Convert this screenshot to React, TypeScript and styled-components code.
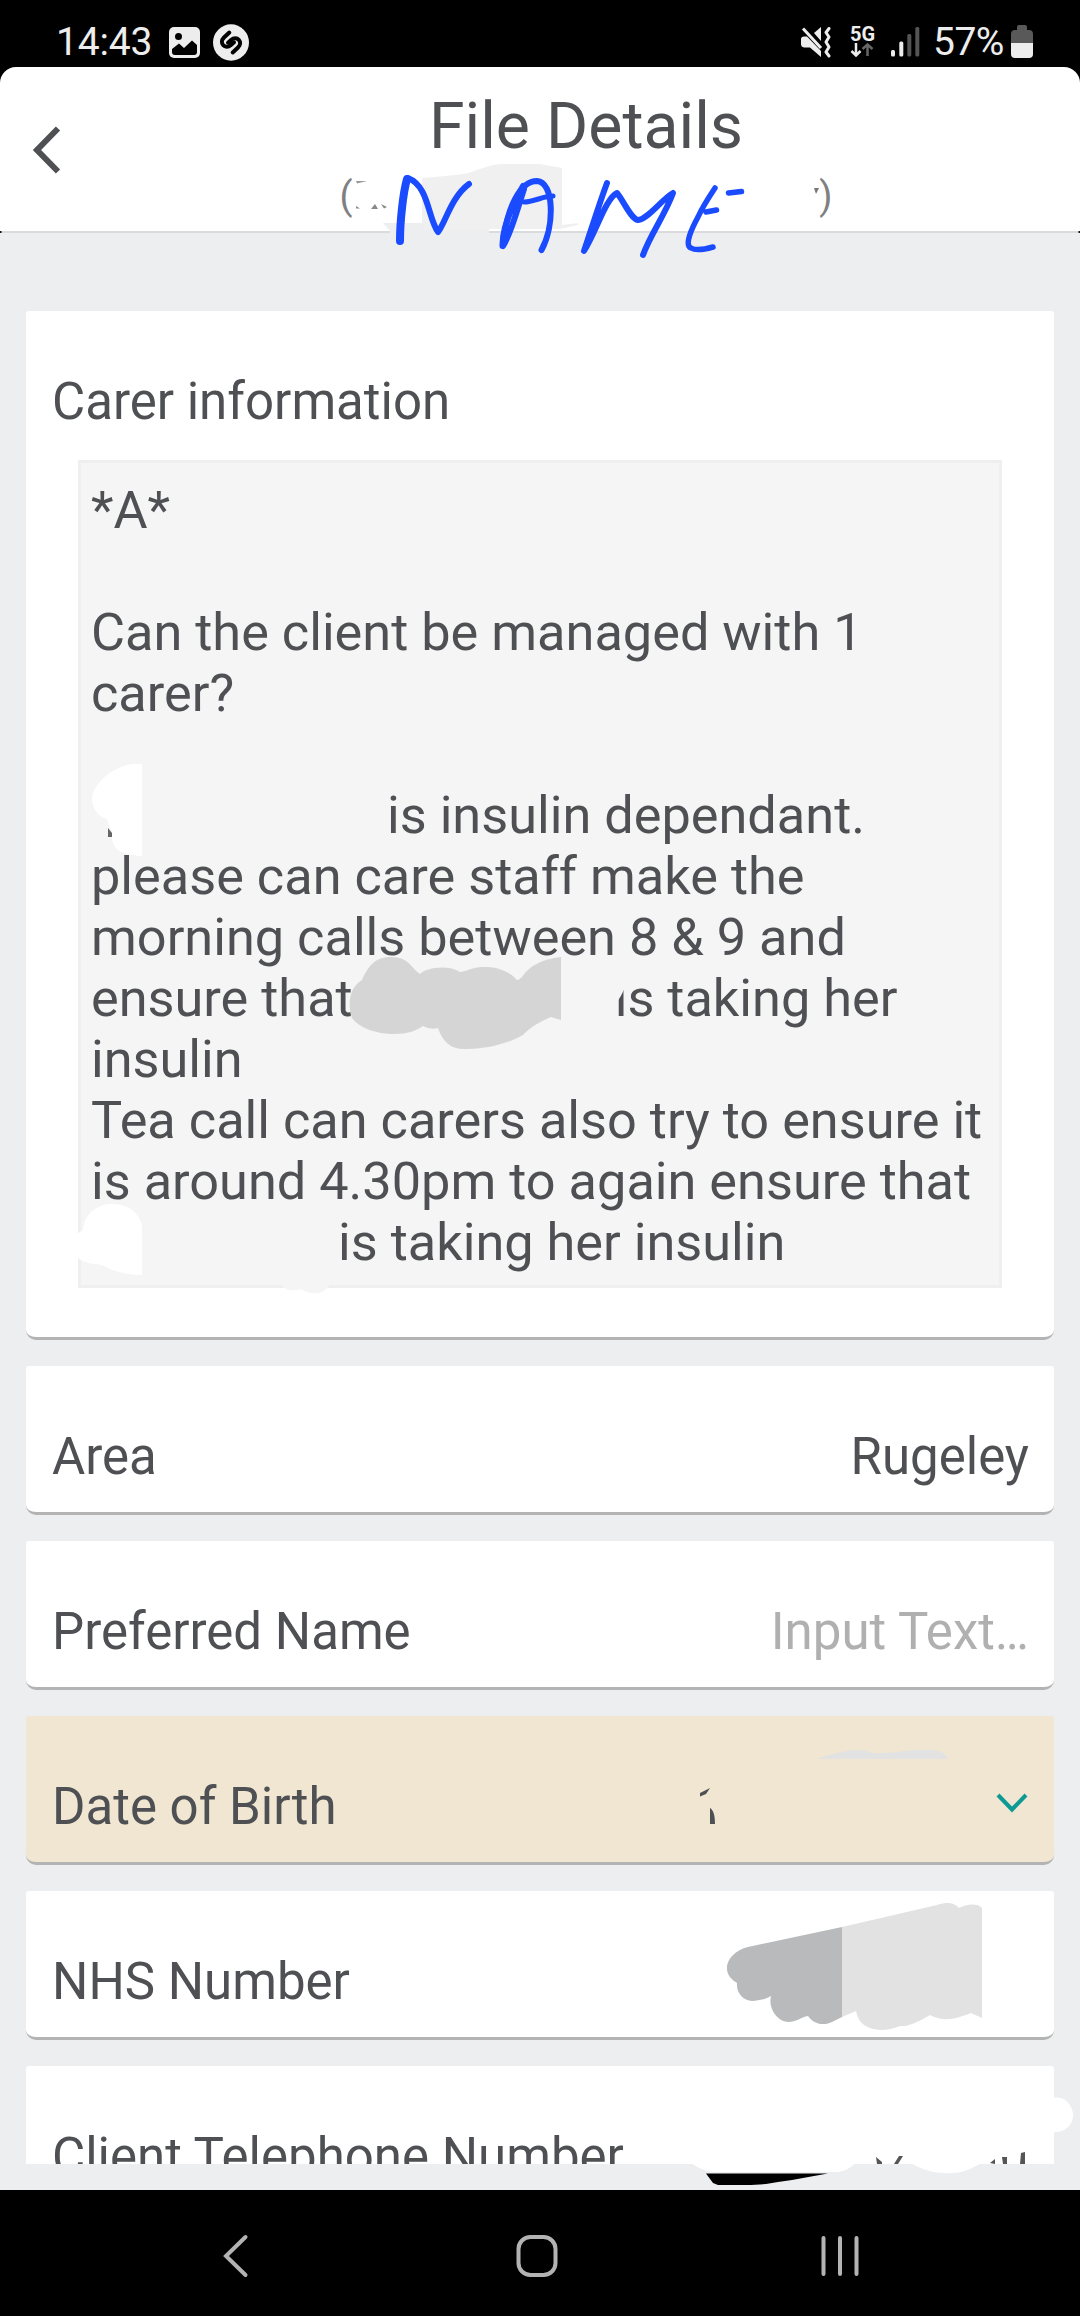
import React from "react";
import styled, { createGlobalStyle } from "styled-components";

const GlobalStyle = createGlobalStyle`
  * { box-sizing: border-box; }
  body { margin: 0; background: #000; }
`;

const Screen = styled.div`
  position: relative;
  display: flex;
  flex-direction: column;
  width: 1080px;
  height: 2316px;
  overflow: hidden;
  background: #000;
  color: #4f5053;
  font-family: Roboto, "Liberation Sans", sans-serif;
  font-size: 51px;
  line-height: 61px;
`;

const StatusBar = styled.header`
  display: flex;
  justify-content: space-between;
  flex: none;
  height: 67px;
  padding: 18px 47px 0 56px;
  color: #ededed;
  font-size: 39px;
  line-height: 48px;
`;

const StatusGroup = styled.div`
  display: flex;
  align-items: flex-start;
`;

const StatusIcon = styled.svg<{ $left: number; $top?: number }>`
  display: block;
  flex: none;
  margin-left: ${(p) => p.$left}px;
  margin-top: ${(p) => p.$top ?? 0}px;
`;

const Network = styled.div`
  display: flex;
  flex-direction: column;
  width: 25px;
  margin: 7px 0 0 18px;
  font-size: 20px;
  font-weight: 700;
  line-height: 18px;
`;

const Clock = styled.span`
  width: 96px;
  letter-spacing: -0.2px;
  white-space: nowrap;
`;

const Percent = styled.span`
  width: 75px;
  margin-left: 13px;
  letter-spacing: -0.5px;
  white-space: nowrap;
`;

const TitleBar = styled.div`
  display: grid;
  grid-template-columns: 92px 1fr;
  flex: none;
  height: 166px;
  border-bottom: 2px solid #d9dbde;
  border-radius: 16px 16px 0 0;
  background: #fff;
`;

const BackIcon = styled.svg`
  display: block;
  margin: 58px 0 0 32px;
`;

const TitleBlock = styled.div`
  display: flex;
  flex-direction: column;
  align-items: center;
  padding-top: 21px;
`;

const Title = styled.h1`
  margin: 0;
  font-size: 64.4px;
  font-weight: 400;
  line-height: 76px;
`;

const Subtitle = styled.div`
  display: flex;
  justify-content: space-between;
  width: 493px;
  color: #808080;
  font-size: 38px;
  line-height: 44px;
  margin-top: 10px;
`;

const Content = styled.main`
  flex: none;
  height: 1957px;
  padding: 78px 26px 26px;
  background: #edeef0;
`;

const Scroller = styled.div`
  display: flex;
  flex-direction: column;
  gap: 26px;
  height: 1853px;
  overflow: hidden;
`;

const Card = styled.section<{ $tint?: boolean }>`
  flex: none;
  padding: 60px 25px 25px 26px;
  border-bottom: 3px solid #b3b3b3;
  border-radius: 3px 3px 10px 10px;
  background: ${(p) => (p.$tint ? "#f0e6d2" : "#fff")};
`;

const Row = styled.div`
  display: flex;
  justify-content: space-between;
  align-items: flex-start;
  height: 61px;
`;

const Value = styled.span<{ $muted?: boolean }>`
  color: ${(p) => (p.$muted ? "#b0b0b0" : "inherit")};
`;

const Notes = styled.div`
  width: 924px;
  height: 828px;
  margin: 28px 0 24px 26px;
  padding: 17px 10px 0 10px;
  border: 3px solid #efefef;
  background: #f5f5f5;
  font-size: 52.27px;
  white-space: nowrap;
`;

const Line = styled.div<{ $indent?: number }>`
  height: 61px;
  padding-left: ${(p) => p.$indent ?? 0}px;
`;

const Gap = styled.span<{ $w: number }>`
  display: inline-block;
  width: ${(p) => p.$w}px;
`;

const Chevron = styled.svg`
  display: block;
  margin: 15px 1px 0 0;
`;

const NavBar = styled.nav`
  display: flex;
  flex: none;
  height: 126px;
  padding: 41px 0 0 222px;
`;

const NavIcon = styled.svg<{ $left?: number }>`
  display: block;
  flex: none;
  margin-left: ${(p) => p.$left ?? 0}px;
`;

const Markup = styled.svg`
  position: absolute;
  inset: 0;
  pointer-events: none;
`;

function Field({
  label,
  tint,
  children,
}: {
  label: string;
  tint?: boolean;
  children?: React.ReactNode;
}) {
  return (
    <Card $tint={tint}>
      <Row>
        <span>{label}</span>
        {children}
      </Row>
    </Card>
  );
}

function StatusIcons() {
  return (
    <StatusBar>
      <StatusGroup>
        <Clock>14:43</Clock>
        <StatusIcon $left={17} $top={9} width="31" height="31" viewBox="0 0 31 31">
          <rect width="31" height="31" rx="5" fill="#ededed" />
          <circle cx="9.5" cy="9.5" r="3.5" fill="#000" />
          <path d="M3 22 L10 16.5 L15 21 L23 13.5 L28 18 V25 Q28 28 25 28 H6 Q3 28 3 25 Z" fill="#000" />
        </StatusIcon>
        <StatusIcon $left={13} $top={6} width="36" height="37" viewBox="0 0 36 37">
          <ellipse cx="18" cy="18.5" rx="18" ry="18.2" fill="#ededed" />
          <path
            d="M16.3 8.5 L11 13.5 C5.5 19 12 26 18 21 L21 18.3"
            fill="none"
            stroke="#000"
            strokeWidth="4"
            strokeLinecap="round"
          />
          <path
            d="M19.7 28.5 L25 23.5 C30.5 18 24 11 18 16 L15 18.7"
            fill="none"
            stroke="#000"
            strokeWidth="4"
            strokeLinecap="round"
          />
        </StatusIcon>
      </StatusGroup>
      <StatusGroup>
        <StatusIcon $left={0} $top={9} width="31" height="31" viewBox="0 0 31 31">
          <path d="M0 12 Q0 9.5 3 9.5 H6 L20 24 V30 L9 20.5 H3 Q0 20 0 17 Z" fill="#ededed" />
          <path d="M13 6 L20 0 V14 Z" fill="#ededed" />
          <path d="M2 1.5 L20 21" stroke="#ededed" strokeWidth="3" />
          <path d="M28 1.5 L25 5.5 L28 10 L25 15 L28 20 L25 25 L28 29" fill="none" stroke="#ededed" strokeWidth="3" strokeLinejoin="round" strokeLinecap="round" />
        </StatusIcon>
        <Network>
          5G
          <svg width="24" height="14" viewBox="0 0 24 14">
            <path d="M6 0 V12 M1.500 8 L6 12.500 L10.500 8" fill="none" stroke="#ededed" strokeWidth="2.500" />
            <path d="M17.500 13 V1.500 M12.500 6 L17.500 1.500 L22.500 6" fill="none" stroke="#666" strokeWidth="2.500" />
          </svg>
        </Network>
        <StatusIcon $left={16} $top={9} width="29" height="30" viewBox="0 0 29 30">
          <rect x="0" y="23" width="4" height="6.500" rx="1.500" fill="#ededed" />
          <rect x="8.300" y="14.500" width="4" height="15" rx="1.500" fill="#ededed" />
          <rect x="16.300" y="7" width="4" height="22.500" rx="1.500" fill="#555" />
          <rect x="24.300" y="0" width="4" height="29.500" rx="1.500" fill="#555" />
        </StatusIcon>
        <Percent>57%</Percent>
        <StatusIcon $left={3} $top={7} width="22" height="33" viewBox="0 0 22 33">
          <path d="M6 5 V2 Q6 0 8 0 H14 Q16 0 16 2 V5 H18 Q22 5 22 9 V18 H0 V9 Q0 5 4 5 Z" fill="#595959" />
          <path d="M0 18 H22 V29 Q22 33 18 33 H4 Q0 33 0 29 Z" fill="#ededed" />
        </StatusIcon>
      </StatusGroup>
    </StatusBar>
  );
}

function MarkupLayer() {
  return (
    <Markup width="1080" height="2316" viewBox="0 0 1080 2316">
      <rect x="0" y="231" width="1.500" height="2" fill="#111" />
      <rect x="1078.500" y="231" width="1.500" height="2" fill="#111" />
      {/* Eraser marks around the client name */}
      <path d="M422 224 V178 C446 176 458 175 468 173 C480 169 490 165 500 164 H540 L562 168 V225 L578 223 V225 L560 229 H489 V231 H422 Z" fill="#f0f0f1" />
      <path d="M383 223 H424 V230 H489 V235 H390 V231 Z" fill="#edeef0" />
      <path d="M356 181 L367 181 L357 183.500 Z" fill="#999" />
      <path d="M356 206 L360 208.500 H356 Z M371 209 L375 204 L378 209 Z M381 204 L387 207 L384 208.500 Z" fill="#888" />
      <path d="M814 188 H819 L816 194 Z" fill="#777" />
      {/* Pen annotation */}
      <g fill="none" stroke="#1a4bff" strokeWidth="6" strokeLinecap="round" strokeLinejoin="round">
        <path d="M400 241 C400 222 403 193 407 179" strokeWidth="8" />
        <path d="M408 178 C429 186 428 219 438 232 C445 224 451 197 469 184" />
        <path d="M502.500 246 C502 225 514 202 523 186 M503 246 C511 234 518 207 524 189" />
        <path d="M504 238 C507 211 519 181 537 181 C554 182 555 225 541.500 250" />
        <path d="M524 202 C534 202 543 196 553 196" strokeWidth="5" />
        <path d="M607 183 C598 207 591 231 584 251 C596 232 606 198 617 193 C623 200 631 219 638 220 C648 219 661 200 673 193 C665 215 650 235 643 255" />
        <path d="M585 249 C589 232 595 222 598 211" strokeWidth="5" />
        <path d="M715 188 C707 200 702 208 698 217 C692 228 684 245 691 248 C696 251 706 249 713 247 M706 212 L716.500 210 M728.500 193 L741.500 191.500" strokeWidth="5.500" />
      </g>
      {/* Erased names in the notes */}
      <path d="M142 764 C117 762 93 782 92 799 C92 809 100 818 107 819 L112 833 C111 846 116 855 142 856 Z" fill="#fff" />
      <path d="M108 828 L112 833 V837 H108 Z" fill="#666" />
      <path
        d="M561 957 C542 959 529 966 522 977 C517 981 518 981 513 976 C499 966 488 967 481 967 C470 968 465 972 460 972 C448 964 425 968 420 974 C411 968 409 957 391 957 C374 957 368 967 362 980 C350 987 347 1003 352 1018 C361 1030 380 1034 394 1034 C407 1034 416 1031 423 1026 Q430 1030 438 1028 C443 1043 452 1050 467 1049 C490 1049 511 1042 523 1035 C532 1025 544 1020 551 1017 L561 1020 Z"
        fill="#d5d5d5"
      />
      <path d="M590 966 H626 C629 982 624 992 617 1002 L605 1030 H590 Z" fill="#f5f5f5" />
      <path d="M142 1225 C136 1205 119 1204 109 1204 C94 1206 84 1216 83 1230 L78 1233 V1258 C87 1266 98 1262 106 1267 Q122 1275 142 1275 Z" fill="#fff" />
      <path d="M281 1284 C286 1292 294 1291 301 1289 C311 1296 324 1294 329 1286 V1284 Z" fill="#f5f5f5" />
      {/* Erased date and NHS number */}
      <path d="M816 1759 C829 1755 845 1750 860 1750 C868 1750 872 1754 880 1753 C900 1753 910 1749 932 1750 C940 1750 948 1755 948 1759 Z" fill="#e2e2e2" />
      <path d="M700 1793 L710 1788 L706 1794 L700 1796.500 Z M710 1808 C713 1810 715 1814 715 1824 H710 Z" fill="#4f5053" />
      <path d="M842 1927 L748 1947 C735 1950 726 1960 727 1969 C727 1975 732 1980 737 1983 C736 1995 745 2001 753 2001 C763 2000 765 1999 771 1996 C768 2008 777 2022 789 2022 C799 2021 801 2017 808 2016 C815 2026 826 2025 832 2022 L842 2017 Z" fill="#b8babc" />
      <path d="M842 1927 L937 1905 C950 1901 955 1904 959 1908 C967 1904 977 1903 982 1908 V2018 L971 2013 C958 2018 945 2023 930 2015 C918 2022 908 2027 900 2026 C880 2034 859 2030 856 2011 L842 2017 Z" fill="#e2e2e2" />
      {/* Erased telephone number */}
      <path d="M690 2162 C697 2168 704 2170 711 2172 H838 C846 2171 852 2167 856 2162 Z M910 2162 C923 2172 942 2174 953 2173 C966 2173 976 2165 985 2162 Z" fill="#fff" />
      <path d="M1053 2098 C1065 2095 1073 2106 1073 2115 C1073 2125 1065 2133 1053 2132 Z" fill="#fff" />
      <path d="M706 2173.500 H828 L814 2176 L803 2178 L792 2180 L778 2182 L766 2184 L751 2185 H718 L713 2183 Z" fill="#000" />
      <path d="M876 2157 L882 2162 V2164 H877 Z M899 2156 H903 L898 2164 H894 Z M990 2163 L995 2159 V2164 Z M1002 2157 H1007 V2164 H1003 Z M1021 2153 L1025 2152 V2164 H1020 Z" fill="#555" />
    </Markup>
  );
}

export default function App() {
  return (
    <>
      <GlobalStyle />
      <Screen>
        <StatusIcons />
        <TitleBar>
          <BackIcon width="30" height="50" viewBox="0 0 30 50">
            <path d="M26 3.500 L5 25 L26 46.500" fill="none" stroke="#4f5053" strokeWidth="6" />
          </BackIcon>
          <TitleBlock>
            <Title>File Details</Title>
            <Subtitle>
              <span>(</span>
              <span>)</span>
            </Subtitle>
          </TitleBlock>
        </TitleBar>
        <Content>
          <Scroller>
            <Card>
              <Row>
                <span>Carer information</span>
              </Row>
              <Notes>
                <Line>*A*</Line>
                <Line />
                <Line>Can the client be managed with 1</Line>
                <Line>carer?</Line>
                <Line />
                <Line $indent={296}>is insulin dependant.</Line>
                <Line>please can care staff make the</Line>
                <Line>morning calls between 8 &amp; 9 and</Line>
                <Line>
                  ensure that
                  <Gap $w={262} />
                  is taking her
                </Line>
                <Line>insulin</Line>
                <Line>Tea call can carers also try to ensure it</Line>
                <Line>is around 4.30pm to again ensure that</Line>
                <Line $indent={247}>is taking her insulin</Line>
              </Notes>
            </Card>
            <Field label="Area">
              <Value>Rugeley</Value>
            </Field>
            <Field label="Preferred Name">
              <Value $muted>Input Text…</Value>
            </Field>
            <Field label="Date of Birth" tint>
              <Chevron width="32" height="30" viewBox="0 0 32 30">
                <path d="M2 4 L16 18.500 L30 4" fill="none" stroke="#0e9a94" strokeWidth="4" />
              </Chevron>
            </Field>
            <Field label="NHS Number" />
            <Field label="Client Telephone Number" />
          </Scroller>
        </Content>
        <NavBar>
          <NavIcon width="28" height="50" viewBox="0 0 28 50">
            <path d="M23.500 6 L4 25 L23.500 44" fill="none" stroke="#b3b3b3" strokeWidth="4" strokeLinecap="round" />
          </NavIcon>
          <NavIcon $left={266} width="42" height="50" viewBox="0 0 42 50">
            <rect x="2.500" y="6" width="37" height="38" rx="12" fill="none" stroke="#b3b3b3" strokeWidth="4" />
          </NavIcon>
          <NavIcon $left={262} width="40" height="50" viewBox="0 0 40 50">
            <path d="M3.500 7 V43 M20 7 V43 M36.500 7 V43" fill="none" stroke="#b3b3b3" strokeWidth="4" strokeLinecap="round" />
          </NavIcon>
        </NavBar>
        <MarkupLayer />
      </Screen>
    </>
  );
}
